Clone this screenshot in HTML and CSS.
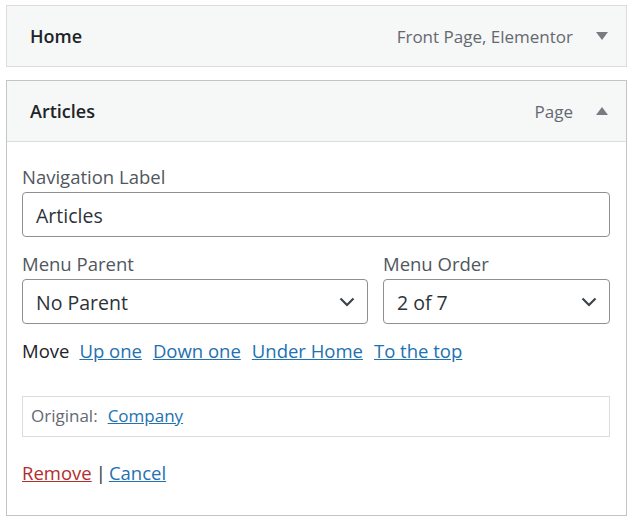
FILE: index.html
```html
<!DOCTYPE html>
<html>
<head>
<meta charset="utf-8">
<link rel="stylesheet" href="styles.css">
</head>
<body>
<div class="item">
  <div class="bar">
    <span class="title">Home</span>
    <span class="meta">Front Page, Elementor</span>
    <svg class="tri" width="12" height="8" viewBox="0 0 12 8"><path d="M0 0H12L6 8Z" fill="#787c82"/></svg>
  </div>
</div>
<div class="item open">
  <div class="bar">
    <span class="title">Articles</span>
    <span class="meta">Page</span>
    <svg class="tri" width="12" height="8" viewBox="0 0 12 8"><path d="M0 8H12L6 0Z" fill="#787c82"/></svg>
  </div>
  <div class="settings">
    <label class="field">
      <span class="lbl">Navigation Label</span>
      <span class="input">Articles</span>
    </label>
    <div class="row">
      <label class="field parent">
        <span class="lbl">Menu Parent</span>
        <span class="input select">No Parent<svg class="chev" width="16" height="10" viewBox="0 0 16 10"><path d="M1.5 1.5L8 8L14.5 1.5" fill="none" stroke="#3c434a" stroke-width="2.2"/></svg></span>
      </label>
      <label class="field order">
        <span class="lbl">Menu Order</span>
        <span class="input select">2 of 7<svg class="chev" width="16" height="10" viewBox="0 0 16 10"><path d="M1.5 1.5L8 8L14.5 1.5" fill="none" stroke="#3c434a" stroke-width="2.2"/></svg></span>
      </label>
    </div>
    <div class="move">
      <span>Move</span>
      <a href="#">Up one</a>
      <a href="#">Down one</a>
      <a href="#">Under Home</a>
      <a href="#">To the top</a>
    </div>
    <div class="original">
      <span class="olbl">Original:</span>
      <a href="#">Company</a>
    </div>
    <div class="actions">
      <a href="#" class="remove">Remove</a><span class="sep">|</span><a href="#">Cancel</a>
    </div>
  </div>
</div>
</body>
</html>
```
FILE: styles.css
```css
html, body { background: #fff; }
body {
  margin: 5px 6px 0 6px;
  font-family: "Open Sans", "Noto Sans", sans-serif;
  font-size: 18px;
  color: #1d2327;
}
.item {
  border: 1px solid #dcdcde;
  margin-bottom: 13px;
}
.item.open { border-color: #c3c4c7; }
.bar {
  display: flex;
  align-items: center;
  height: 60px;
  background: #f6f7f7;
  padding: 0 18px 0 23px;
}
.item.open .bar { border-bottom: 1px solid #dcdcde; }
.title { font-weight: 600; flex: 1; }
.meta { color: #646970; font-size: 17px; margin-right: 23px; }
.tri { display: block; }
.settings {
  padding: 23px 16px 30px 15px;
}
.field { display: flex; flex-direction: column; }
.lbl { color: #50575e; font-size: 18.5px; line-height: 24px; margin-bottom: 3px; }
.input {
  display: flex;
  align-items: center;
  box-sizing: border-box;
  height: 45px;
  border: 1px solid #8c8f94;
  border-radius: 4px;
  padding: 2px 13px 0 13px;
  font-size: 19.5px;
  color: #2c3338;
}
.row { display: flex; gap: 15px; margin-top: 15px; }
.parent { width: 346px; }
.order { flex: 1; }
.select { justify-content: space-between; padding-right: 12px; padding-top: 0; }
.select { padding-top: 2px; }
.chev { display: block; margin-top: -2px; }
.move {
  margin-top: 15px;
  display: flex;
  gap: 11px;
  align-items: baseline;
  font-size: 18.5px;
  line-height: 24px;
}
.move span { margin-right: -1px; }
a { color: #2271b1; text-decoration: underline; }
.original {
  margin-top: 33px;
  border: 1px solid #dcdcde;
  box-sizing: border-box;
  height: 41px;
  display: flex;
  align-items: center;
  padding: 0 8px 3px 8px;
  gap: 10px;
  font-size: 17px;
}
.olbl { color: #646970; }
.actions { margin-top: 24px; font-size: 18.5px; line-height: 24px; }
a.remove { color: #b32d2e; }
.sep { color: #2c3338; margin: 0 3px 0 4px; }
```
